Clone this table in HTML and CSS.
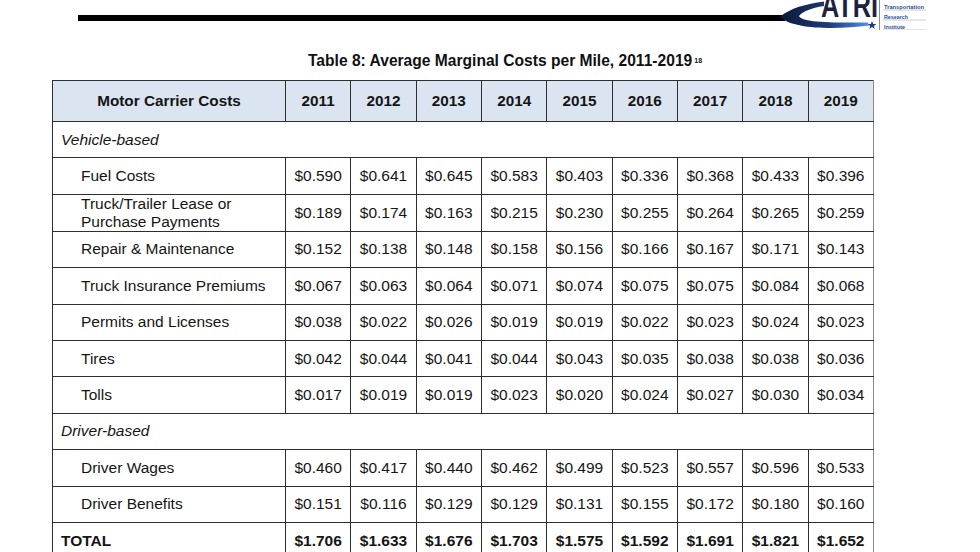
FILE: index.html
```html
<!DOCTYPE html>
<html>
<head>
<meta charset="utf-8">
<link rel="stylesheet" href="styles.css">
</head>
<body>
<header class="top">
  <div class="rule"></div>
  <svg class="logo" width="150" height="32" viewBox="0 0 150 32" aria-label="ATRI Transportation Research Institute">
    <defs>
      <linearGradient id="sw" x1="0" y1="0" x2="1" y2="0">
        <stop offset="0" stop-color="#0b1836"/>
        <stop offset="0.55" stop-color="#1d3a7c"/>
        <stop offset="1" stop-color="#4d93e6"/>
      </linearGradient>
    </defs>
    <path d="M2,17 C12,8 28,4 46,1.5 L46,6 C33,8 24,12 21,16 C24,22 46,23 90,22.5 L91,25.5 C60,29.5 16,30 2,17 Z" fill="url(#sw)"/>
    <text x="43" y="17" class="atri" textLength="57" lengthAdjust="spacingAndGlyphs">ATRI</text>
    <polygon points="94,21 95.2,24 98.3,24 95.8,25.9 96.8,29 94,27.1 91.2,29 92.2,25.9 89.7,24 92.8,24" fill="#1d3a7c"/>
    <line x1="101.5" y1="0" x2="101.5" y2="30" stroke="#8a8f9a" stroke-width="1"/>
    <text x="106" y="8.5" class="tri" textLength="40" lengthAdjust="spacingAndGlyphs">Transportation</text>
    <line x1="105" y1="10" x2="148" y2="10" stroke="#b8bcc4" stroke-width="0.8"/>
    <text x="106" y="18.5" class="tri" textLength="24" lengthAdjust="spacingAndGlyphs">Research</text>
    <line x1="105" y1="20" x2="148" y2="20" stroke="#b8bcc4" stroke-width="0.8"/>
    <text x="106" y="28.5" class="tri" textLength="21" lengthAdjust="spacingAndGlyphs">Institute</text>
    <line x1="105" y1="30" x2="148" y2="30" stroke="#b8bcc4" stroke-width="0.8"/>
  </svg>
</header>

<h1 class="title">Table 8: Average Marginal Costs per Mile, 2011-2019<sup class="fn">18</sup></h1>

<table class="costs">
  <colgroup>
    <col class="c-label">
    <col class="c-year"><col class="c-year"><col class="c-year"><col class="c-year"><col class="c-year"><col class="c-year"><col class="c-year"><col class="c-year"><col class="c-year">
  </colgroup>
  <thead>
    <tr class="head">
      <th>Motor Carrier Costs</th>
      <th>2011</th><th>2012</th><th>2013</th><th>2014</th><th>2015</th><th>2016</th><th>2017</th><th>2018</th><th>2019</th>
    </tr>
  </thead>
  <tbody>
    <tr class="group"><td colspan="10">Vehicle-based</td></tr>
    <tr><td class="item">Fuel Costs</td><td>$0.590</td><td>$0.641</td><td>$0.645</td><td>$0.583</td><td>$0.403</td><td>$0.336</td><td>$0.368</td><td>$0.433</td><td>$0.396</td></tr>
    <tr><td class="item two">Truck/Trailer Lease or<br>Purchase Payments</td><td>$0.189</td><td>$0.174</td><td>$0.163</td><td>$0.215</td><td>$0.230</td><td>$0.255</td><td>$0.264</td><td>$0.265</td><td>$0.259</td></tr>
    <tr><td class="item">Repair &amp; Maintenance</td><td>$0.152</td><td>$0.138</td><td>$0.148</td><td>$0.158</td><td>$0.156</td><td>$0.166</td><td>$0.167</td><td>$0.171</td><td>$0.143</td></tr>
    <tr><td class="item">Truck Insurance Premiums</td><td>$0.067</td><td>$0.063</td><td>$0.064</td><td>$0.071</td><td>$0.074</td><td>$0.075</td><td>$0.075</td><td>$0.084</td><td>$0.068</td></tr>
    <tr><td class="item">Permits and Licenses</td><td>$0.038</td><td>$0.022</td><td>$0.026</td><td>$0.019</td><td>$0.019</td><td>$0.022</td><td>$0.023</td><td>$0.024</td><td>$0.023</td></tr>
    <tr><td class="item">Tires</td><td>$0.042</td><td>$0.044</td><td>$0.041</td><td>$0.044</td><td>$0.043</td><td>$0.035</td><td>$0.038</td><td>$0.038</td><td>$0.036</td></tr>
    <tr><td class="item">Tolls</td><td>$0.017</td><td>$0.019</td><td>$0.019</td><td>$0.023</td><td>$0.020</td><td>$0.024</td><td>$0.027</td><td>$0.030</td><td>$0.034</td></tr>
    <tr class="group"><td colspan="10">Driver-based</td></tr>
    <tr><td class="item">Driver Wages</td><td>$0.460</td><td>$0.417</td><td>$0.440</td><td>$0.462</td><td>$0.499</td><td>$0.523</td><td>$0.557</td><td>$0.596</td><td>$0.533</td></tr>
    <tr><td class="item">Driver Benefits</td><td>$0.151</td><td>$0.116</td><td>$0.129</td><td>$0.129</td><td>$0.131</td><td>$0.155</td><td>$0.172</td><td>$0.180</td><td>$0.160</td></tr>
    <tr class="total"><td class="tlabel">TOTAL</td><td>$1.706</td><td>$1.633</td><td>$1.676</td><td>$1.703</td><td>$1.575</td><td>$1.592</td><td>$1.691</td><td>$1.821</td><td>$1.652</td></tr>
  </tbody>
</table>
</body>
</html>
```

FILE: styles.css
```css
html {
  overflow: hidden;
  background: #fff;
}
body {
  margin: 0;
  background: #fff;
  color: #151515;
  font-family: "Liberation Sans", Arial, sans-serif;
}

.top {
  display: flex;
  align-items: flex-start;
  height: 30px;
  overflow: hidden;
}
.rule {
  margin-left: 78px;
  margin-top: 15px;
  width: 707px;
  height: 6px;
  background: #000;
}
.logo {
  display: block;
  margin-left: -7px;
  flex: none;
}
.atri {
  font-family: "Liberation Sans", Arial, sans-serif;
  font-weight: 700;
  font-size: 34px;
  fill: #1a2440;
}
.tri {
  font-family: "Liberation Sans Narrow", "Liberation Sans", Arial, sans-serif;
  font-weight: 700;
  font-size: 6px;
  fill: #2d4f95;
}

.title {
  margin: 22px 0 10px 0;
  padding-left: 308px;
  height: 18px;
  line-height: 18px;
  font-size: 15.6px;
  font-weight: 700;
  color: #111;
}
.fn {
  font-size: 7px;
  vertical-align: 3px;
  margin-left: 2px;
  line-height: 0;
}

.costs {
  margin-left: 52px;
  border-collapse: collapse;
  table-layout: fixed;
  width: 821px;
  font-size: 15.5px;
  border-right: 1px solid #8a8a8a;
}
.c-label { width: 233px; }
.c-year { width: 65.33px; }

.costs th,
.costs td {
  border: 1px solid #2e2e2e;
  padding: 0;
  text-align: center;
  vertical-align: middle;
  white-space: nowrap;
}
.costs th:last-child,
.costs td:last-child {
  border-right-color: #8a8a8a;
}

.head {
  height: 41px;
}
.head th {
  background: #dbe5f1;
  font-weight: 700;
  font-size: 15.3px;
}

.costs tbody tr {
  height: 36.4px;
}
.group td {
  text-align: left;
  font-style: italic;
  padding-left: 8px;
}
.costs td.item {
  text-align: left;
  padding-left: 28px;
}
.costs td.two {
  line-height: 18px;
}
.total td {
  font-weight: 700;
}
.costs td.tlabel {
  text-align: left;
  padding-left: 8px;
}
```
